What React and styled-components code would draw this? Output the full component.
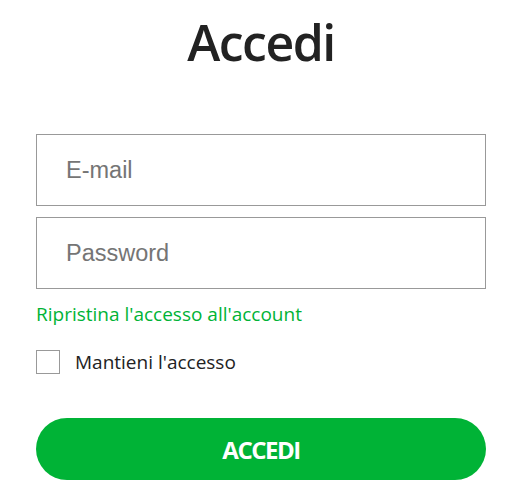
import React, { useState } from "react";
import styled, { createGlobalStyle } from "styled-components";

const GlobalStyle = createGlobalStyle`
  body {
    margin: 0;
    background: #fff;
    font-family: "Open Sans", "Noto Sans", sans-serif;
  }
`;

const Wrapper = styled.div`
  width: 516px;
  padding: 0 30px 0 36px;
  box-sizing: border-box;
`;

const Title = styled.h1`
  margin: 12px 0 0;
  text-align: center;
  font-size: 50px;
  font-weight: 600;
  letter-spacing: -1.5px;
  color: #222;
  line-height: 60px;
`;

const Form = styled.form`
  display: flex;
  flex-direction: column;
  margin-top: 62px;
`;

const Input = styled.input`
  height: 72px;
  box-sizing: border-box;
  border: 1px solid #999;
  padding: 0 0 0 29px;
  font-family: "Liberation Sans", Arial, sans-serif;
  font-size: 23.5px;
  color: #222;
  outline: none;
  & + & {
    margin-top: 11px;
  }
  &::placeholder {
    color: #757575;
  }
`;

const Link = styled.a`
  margin-top: 13px;
  color: #00b336;
  font-size: 19px;
  text-decoration: none;
  line-height: 24px;
`;

const CheckRow = styled.label`
  display: flex;
  align-items: center;
  margin-top: 24px;
  gap: 15px;
  font-size: 19px;
  line-height: 24px;
  color: #222;
`;

const Box = styled.span`
  width: 24px;
  height: 24px;
  box-sizing: border-box;
  border: 1px solid #999;
  background: ${(p) => (p.checked ? "#00b336" : "#fff")};
`;

const Submit = styled.button`
  margin-top: 44px;
  height: 62px;
  border: none;
  border-radius: 31px;
  background: #00b336;
  color: #fff;
  font-family: "Open Sans", "Noto Sans", sans-serif;
  font-size: 24px;
  font-weight: 700;
  letter-spacing: -1.5px;
`;

export default function App() {
  const [keep, setKeep] = useState(false);
  return (
    <Wrapper>
      <GlobalStyle />
      <Title>Accedi</Title>
      <Form onSubmit={(e) => e.preventDefault()}>
        <Input type="email" placeholder="E-mail" />
        <Input type="password" placeholder="Password" />
        <Link href="#">Ripristina l'accesso all'account</Link>
        <CheckRow onClick={() => setKeep((k) => !k)}>
          <Box checked={keep} />
          Mantieni l'accesso
        </CheckRow>
        <Submit type="submit">ACCEDI</Submit>
      </Form>
    </Wrapper>
  );
}
